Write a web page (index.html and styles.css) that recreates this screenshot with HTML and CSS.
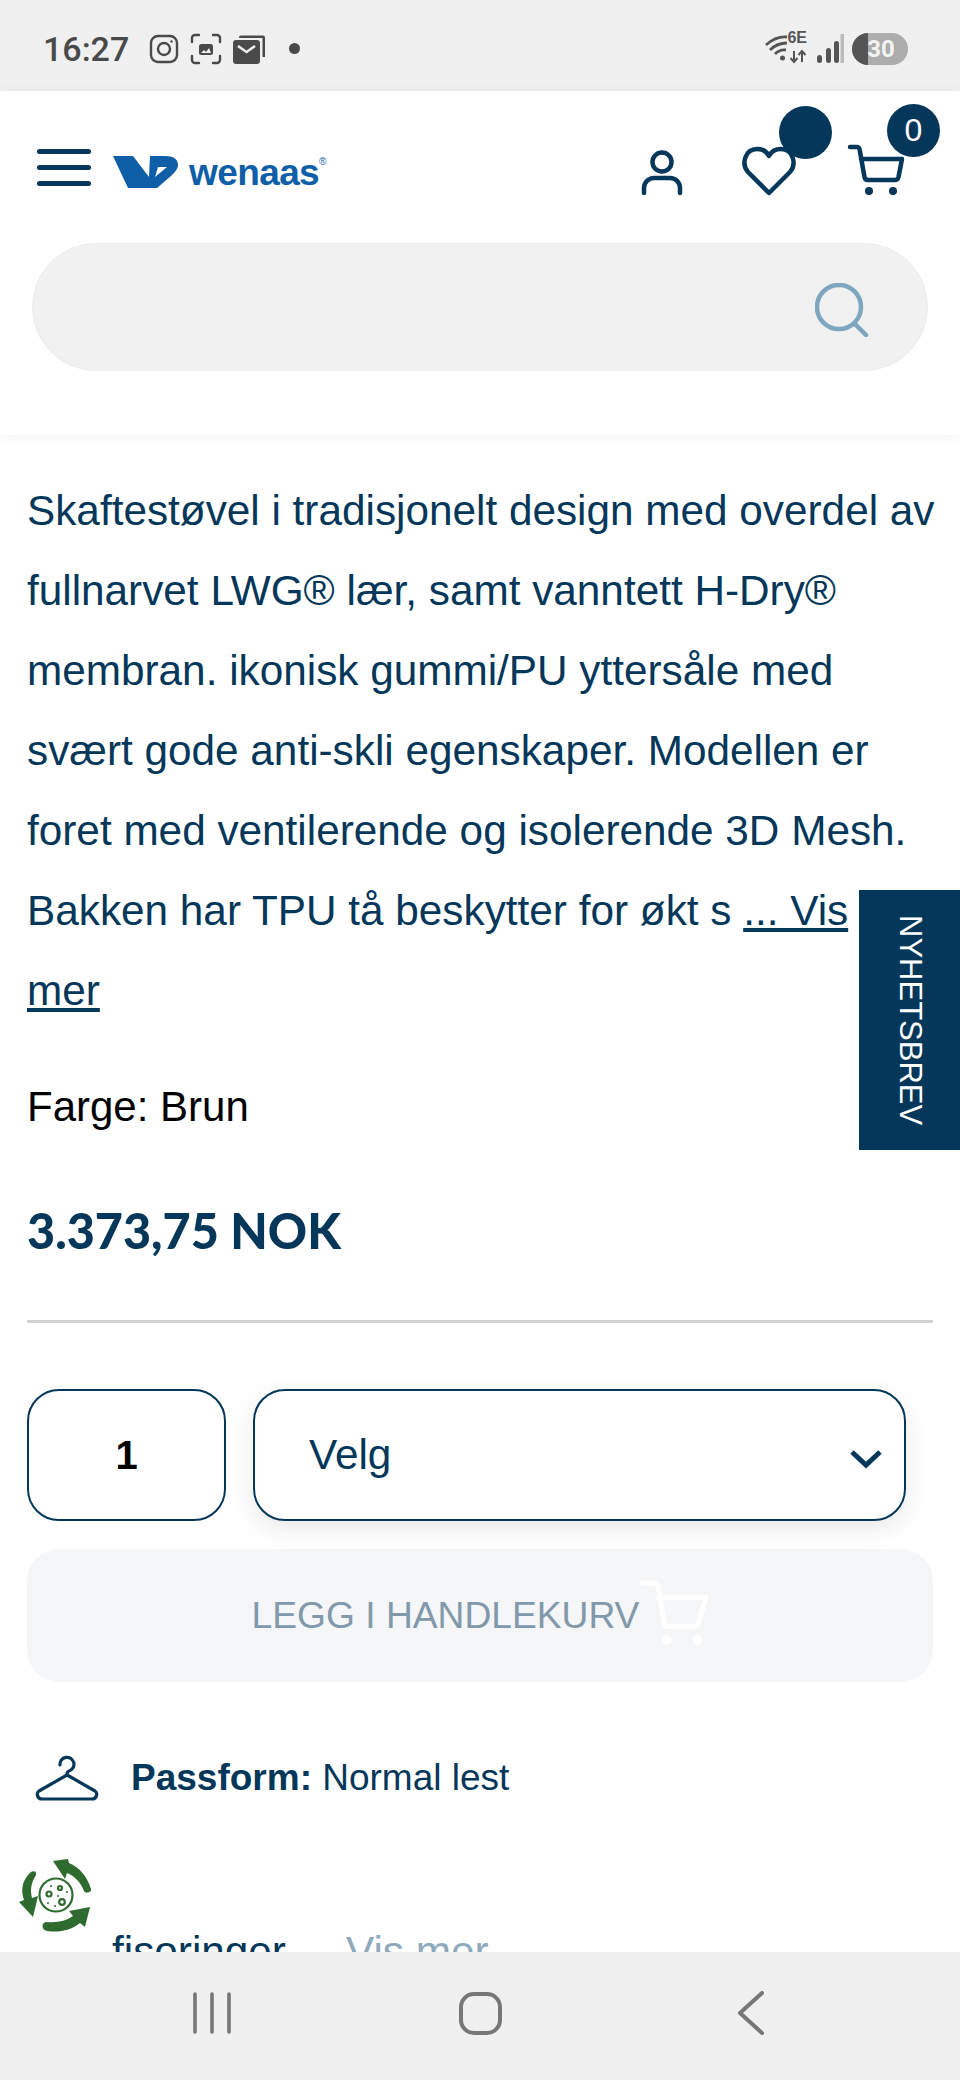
FILE: index.html
```html
<!DOCTYPE html>
<html lang="no">
<head>
<meta charset="utf-8">
<title>Wenaas</title>
<link rel="stylesheet" href="styles.css">
</head>
<body>
<div class="phone">
  <div class="status">
    <div class="status-left">
      <span class="clock">16:27</span>
      <svg class="si" width="30" height="30" viewBox="0 0 30 30" fill="none" stroke="#4a4a4a" stroke-width="2.4"><rect x="2" y="2" width="26" height="26" rx="7"/><circle cx="15" cy="15" r="6"/><circle cx="22.5" cy="7.5" r="1.2" fill="#4a4a4a" stroke="none"/></svg>
      <svg class="si" width="32" height="32" viewBox="0 0 32 32" fill="none" stroke="#4a4a4a" stroke-width="2.4" stroke-linecap="round"><path d="M2 9V5a3 3 0 0 1 3-3h4M23 2h4a3 3 0 0 1 3 3v4M30 23v4a3 3 0 0 1-3 3h-4M9 30H5a3 3 0 0 1-3-3v-4"/><rect x="9" y="11" width="14" height="11" rx="2.5" fill="#4a4a4a" stroke="none"/><path d="M11 20l3-3 2 2 3-4 2 5z" fill="#f0f0f0" stroke="none"/></svg>
      <svg class="si" width="33" height="30" viewBox="0 0 33 30"><path d="M6 3.5a2 2 0 0 1 2-2h22a2 2 0 0 1 2 2V23h-2.500V4H6z" fill="#4a4a4a"/><rect x="0" y="6" width="27" height="24" rx="3" fill="#4a4a4a"/><path d="M5 12l8.500 6L22 12" fill="none" stroke="#f0f0f0" stroke-width="2.600"/></svg>
      <span class="dot"></span>
    </div>
    <div class="status-right">
      <div class="wifi">
        <svg width="42" height="30" viewBox="0 0 42 30" fill="none" stroke="#555" stroke-width="2.800"><path d="M1 11Q11 2 22 3M5 16Q12 9 22 9M10 20Q15 15 21 16"/><circle cx="17.500" cy="24" r="2.500" fill="#555" stroke="none"/><path d="M29 17v11M25.500 24l3.500 4 3.500-4M37 28V17M33.500 21l3.500-4 3.500 4" stroke-width="2"/></svg>
        <span class="six">6E</span>
      </div>
      <svg width="27" height="30" viewBox="0 0 27 30"><rect x="0" y="21" width="5" height="8" rx="2.500" fill="#555"/><rect x="9" y="14" width="5" height="15" rx="2.500" fill="#555"/><rect x="17" y="7" width="5" height="22" rx="2.500" fill="#555"/><rect x="23.500" y="0" width="3.500" height="29" fill="#bbb"/></svg>
      <div class="battery"><span class="battery-fill"></span><span class="battery-num">30</span></div>
    </div>
  </div>

  <header class="header">
    <div class="topbar">
      <div class="burger"><span></span><span></span><span></span></div>
      <div class="logo">
        <svg width="65" height="32" viewBox="0 0 65 32"><path fill-rule="evenodd" d="M0 0H52C62 0 65 4 65 9C65 13 62 16 58 20L44 32H15ZM20 0L36 21L37 0ZM45 11L42 21L54 11Z" fill="#0f5fa8"/></svg>
        <span class="logo-text">wenaas<sup class="reg">®</sup></span>
      </div>
      <div class="icons">
        <svg class="ic-user" width="42" height="46" viewBox="0 0 42 46" fill="none" stroke="#04375a" stroke-width="4.500" stroke-linecap="round"><circle cx="21" cy="12" r="9.500"/><path d="M3 43v-5a10 10 0 0 1 10-10h16a10 10 0 0 1 10 10v5"/></svg>
        <div class="ic ic-heart">
          <svg width="54" height="50" viewBox="0 0 54 50" fill="none" stroke="#04375a" stroke-width="4.500" stroke-linejoin="round"><path d="M27 47L6 26C-1 18 3 3 15 3c6 0 10 3 12 7 2-4 6-7 12-7 12 0 16 15 9 23z"/></svg>
          <span class="badge"></span>
        </div>
        <div class="ic ic-cart">
          <svg width="58" height="52" viewBox="0 0 58 52" fill="none" stroke="#04375a" stroke-width="4.500" stroke-linecap="round" stroke-linejoin="round"><path d="M3 3h7c1.500 0 2 .5 2.500 2l5 28c.4 2 1.500 3 3.500 3h27c2 0 3-1 3.500-3L55 15H14"/><circle cx="22" cy="47" r="4" fill="#04375a" stroke="none"/><circle cx="46" cy="47" r="4" fill="#04375a" stroke="none"/></svg>
          <span class="badge">0</span>
        </div>
      </div>
    </div>
    <div class="search">
      <svg width="56" height="54" viewBox="0 0 56 54" fill="none" stroke="#7fa6bf" stroke-width="4.500" stroke-linecap="round"><circle cx="24" cy="24" r="22"/><path d="M40 41l11 11"/></svg>
    </div>
  </header>

  <main class="main">
    <p class="desc">Skaftestøvel i tradisjonelt design med overdel av fullnarvet LWG® lær, samt vanntett H-Dry® membran. ikonisk gummi/PU yttersåle med svært gode anti-skli egenskaper. Modellen er foret med ventilerende og isolerende 3D Mesh. Bakken har TPU tå beskytter for økt s <a class="more" href="#">... Vis<br>mer</a></p>
    <p class="color">Farge: Brun</p>
    <p class="price">3.373,75 NOK</p>
    <hr class="rule">
    <div class="buy">
      <div class="qty">1</div>
      <div class="select">
        <span>Velg</span>
        <svg width="32" height="20" viewBox="0 0 32 20" fill="none" stroke="#04375a" stroke-width="5"><path d="M2 3l14 13L30 3"/></svg>
      </div>
    </div>
    <div class="add">
      <span>LEGG I HANDLEKURV</span>
      <svg width="70" height="66" viewBox="0 0 66 64" fill="none" stroke="#fff" stroke-width="5" stroke-linecap="round" stroke-linejoin="round"><path d="M2 3h12c2 0 3 1 3.500 3l6 36c.4 2 1.500 3 3.500 3h26c2 0 3-1 3.500-3L64 17H18"/><circle cx="26" cy="58" r="5" fill="#fff" stroke="none"/><circle cx="56" cy="58" r="5" fill="#fff" stroke="none"/></svg>
    </div>
    <div class="fit">
      <svg width="64" height="46" viewBox="0 0 64 46" fill="none" stroke="#04375a" stroke-width="3.200" stroke-linecap="round" stroke-linejoin="round"><path d="M25 10a7 7 0 1 1 9 6c-2 .7-2.500 3-1 4.500L60 36c3 2 2 8-3 8H7c-5 0-6-6-3-8l28-16"/></svg>
      <span class="fit-text"><b>Passform:</b> Normal lest</span>
    </div>
    <div class="feature"><span class="feature-text">fisoringer</span><span class="feature-more">Vis mer</span></div>
  </main>

  <a class="newsletter" href="#">NYHETSBREV</a>

  <svg class="eco" width="74" height="76" viewBox="0 0 74 76" fill="none">
    <g fill="#2f6a2f">
      <path d="M34 3l15-2 1 4c10 4 18 13 22 26 1 3-5 5-7 2-3-8-9-15-17-18l-2 6z"/>
      <path d="M12 14c3-2 6 0 5 3-5 8-6 15-4 23l6-2-5 21-14-15 5-2C1 31 4 21 12 14z"/>
      <path d="M71 49l-5 20-5-4c-9 7-20 10-33 8-6-1-6-9 0-9 10 1 19-1 26-6l-4-5z"/>
    </g>
    <g stroke="#2f6a2f" stroke-width="2.200">
      <circle cx="37" cy="37" r="16.500"/>
      <circle cx="30" cy="36" r="2.500"/>
      <circle cx="41" cy="30" r="2"/>
      <circle cx="43" cy="44" r="2.800"/>
    </g>
    <g fill="#2f6a2f"><circle cx="32" cy="28" r="1"/><circle cx="39" cy="38" r="1"/><circle cx="29" cy="45" r="1"/><circle cx="36" cy="48" r="1"/><circle cx="48" cy="34" r="1"/></g>
  </svg>

  <nav class="navbar">
    <svg width="38" height="42" viewBox="0 0 38 42" stroke="#777" stroke-width="3.600" stroke-linecap="round"><path d="M2 2v38M19 2v38M36 2v38"/></svg>
    <svg width="43" height="43" viewBox="0 0 43 43" fill="none" stroke="#777" stroke-width="4"><rect x="2" y="2" width="39" height="39" rx="13"/></svg>
    <svg width="28" height="44" viewBox="0 0 28 44" fill="none" stroke="#777" stroke-width="4" stroke-linecap="round" stroke-linejoin="round"><path d="M25 2L3 22l22 20"/></svg>
  </nav>
</div>
</body>
</html>
```
FILE: styles.css
```css
* { box-sizing: border-box; }
html, body { margin: 0; padding: 0; background: #fff; }
body { font-family: "Liberation Sans", Arial, sans-serif; color: #04375a; }
.phone { position: relative; width: 960px; height: 2080px; overflow: hidden; display: flex; flex-direction: column; background: #fff; }

.status { flex: none; height: 91px; background: #f0f0f0; display: flex; justify-content: space-between; align-items: center; padding: 6px 52px 0 43px; }
.status-left { display: flex; align-items: center; }
.clock { font-family: Roboto, sans-serif; font-weight: 500; font-size: 34px; color: #4a4a4a; margin-right: 16px; width: 90px; }
.si { margin-right: 11px; flex: none; }
.si + .si + .si { margin-right: 0; }
.dot { width: 11px; height: 11px; border-radius: 50%; background: #4a4a4a; margin-left: 23px; }
.status-right { display: flex; align-items: center; gap: 8px; }
.wifi { position: relative; width: 42px; height: 30px; margin-right: 2px; }
.six { position: absolute; right: 0; top: -4px; font-size: 16px; font-weight: 700; color: #555; line-height: 16px; }
.battery { position: relative; width: 56px; height: 32px; border-radius: 16px; background: #adadad; overflow: hidden; display: flex; align-items: center; justify-content: center; }
.battery-fill { position: absolute; left: 0; top: 0; bottom: 0; width: 16px; background: #555; }
.battery-num { position: relative; left: 1px; font-family: Roboto, sans-serif; font-weight: 700; font-size: 24px; color: #f4f4f4; }

.header { flex: none; height: 344px; background: #fff; box-shadow: 0 2px 14px rgba(0,0,0,.05); position: relative; z-index: 1; }
.topbar { height: 152px; display: flex; align-items: center; padding: 0 0 0 37px; position: relative; }
.burger { display: flex; flex-direction: column; gap: 11px; width: 54px; }
.burger span { display: block; height: 5px; border-radius: 3px; background: #04375a; }
.logo { display: flex; align-items: center; margin: 10px 0 0 22px; }
.logo-text { font-weight: 700; font-size: 37px; color: #0f5fa8; margin-left: 11px; letter-spacing: -.6px; line-height: 1; }
.reg { font-size: 10px; font-weight: 400; vertical-align: 20px; line-height: 0; }
.icons { display: flex; align-items: flex-end; margin-left: auto; padding-right: 55px; padding-top: 6px; }
.ic-user { margin-right: 59px; }
.ic { position: relative; }
.ic-heart { width: 54px; height: 50px; margin-right: 51px; }
.ic-cart { width: 58px; height: 52px; }
.badge { position: absolute; width: 53px; height: 53px; border-radius: 50%; background: #04375a; color: #fff; font-size: 32px; display: flex; align-items: center; justify-content: center; }
.ic-heart .badge { left: 37px; top: -40px; }
.ic-cart .badge { left: 40px; top: -40px; }
.search { margin: 0 32px; height: 128px; border-radius: 64px; background: #f1f1f1; border: 1px solid #ececec; display: flex; align-items: center; justify-content: flex-end; padding-right: 56px; }
.search svg { margin-top: 5px; }

.main { flex: 1; min-height: 0; overflow: hidden; padding: 0 27px; }
.desc { margin: 36px -3px 0 0; font-size: 42.300px; line-height: 80px; color: #04375a; }
.more { color: #04375a; text-decoration: underline; }
.color { margin: 52px 0 0; font-size: 42px; line-height: 48px; color: #000; }
.price { margin: 71px 0 0; font-family: Lato, sans-serif; font-weight: 900; font-size: 48.500px; line-height: 56px; color: #04375a; }
.rule { margin: 62px 0 0; border: 0; height: 3px; background: #d2d2d2; }
.buy { display: flex; margin-top: 66px; gap: 27px; }
.qty { width: 199px; height: 132px; border: 2.500px solid #04375a; border-radius: 32px; display: flex; align-items: center; justify-content: center; font-size: 40px; font-weight: 700; color: #000; }
.select { width: 653px; height: 132px; border: 2.500px solid #04375a; border-radius: 32px; box-shadow: 0 8px 24px rgba(0,0,0,.09); display: flex; align-items: center; justify-content: space-between; padding: 0 22px 0 54px; font-size: 42.300px; color: #04375a; }
.select svg { margin-top: 8px; }
.add { margin-top: 28px; height: 133px; border-radius: 32px; background: #f5f6f8; display: flex; align-items: center; justify-content: center; padding-left: 1px; font-size: 37.200px; color: #8299ab; }
.add svg { margin-top: -6px; }
.fit { display: flex; align-items: center; margin-top: 73px; padding-left: 8px; }
.fit-text { margin-left: 32px; font-size: 37px; color: #04375a; }
.feature { margin-top: 127px; padding-left: 85px; font-size: 42.300px; line-height: 48px; display: flex; gap: 60px; }
.feature-more { color: #8fa9bd; }

.newsletter { position: absolute; right: 0; top: 890px; width: 101px; height: 260px; background: #04375a; color: #fff; writing-mode: vertical-rl; display: flex; align-items: center; justify-content: center; font-size: 31px; text-decoration: none; z-index: 2; }
.eco { position: absolute; left: 19px; top: 1858px; z-index: 2; }
.navbar { flex: none; height: 128px; background: #f0f0f0; display: flex; align-items: center; position: relative; z-index: 3; padding: 0 0 6px 193px; }
.navbar svg:nth-child(1) { margin-right: 228px; }
.navbar svg:nth-child(2) { margin-right: 235px; }
```
